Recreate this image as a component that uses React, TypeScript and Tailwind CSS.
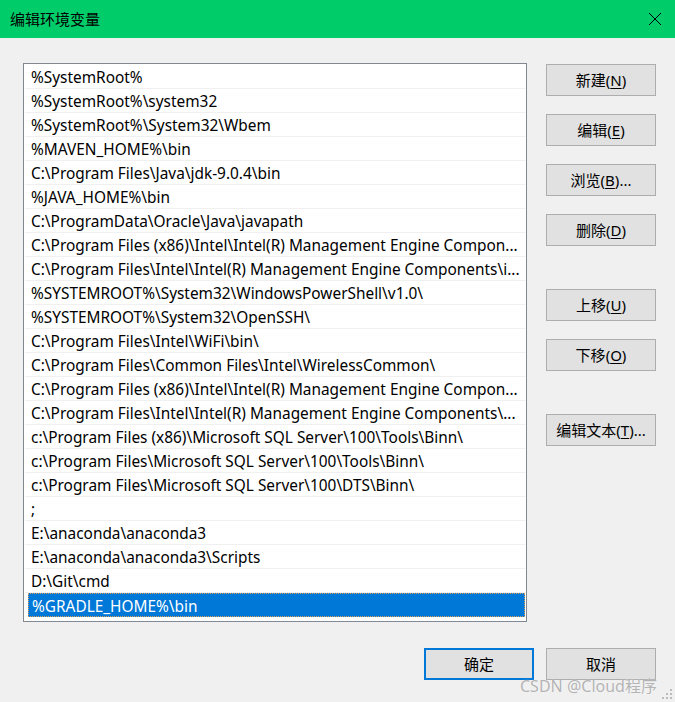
import React from "react";

const paths = [
  "%SystemRoot%",
  "%SystemRoot%\\system32",
  "%SystemRoot%\\System32\\Wbem",
  "%MAVEN_HOME%\\bin",
  "C:\\Program Files\\Java\\jdk-9.0.4\\bin",
  "%JAVA_HOME%\\bin",
  "C:\\ProgramData\\Oracle\\Java\\javapath",
  "C:\\Program Files (x86)\\Intel\\Intel(R) Management Engine Compon...",
  "C:\\Program Files\\Intel\\Intel(R) Management Engine Components\\i...",
  "%SYSTEMROOT%\\System32\\WindowsPowerShell\\v1.0\\",
  "%SYSTEMROOT%\\System32\\OpenSSH\\",
  "C:\\Program Files\\Intel\\WiFi\\bin\\",
  "C:\\Program Files\\Common Files\\Intel\\WirelessCommon\\",
  "C:\\Program Files (x86)\\Intel\\Intel(R) Management Engine Compon...",
  "C:\\Program Files\\Intel\\Intel(R) Management Engine Components\\...",
  "c:\\Program Files (x86)\\Microsoft SQL Server\\100\\Tools\\Binn\\",
  "c:\\Program Files\\Microsoft SQL Server\\100\\Tools\\Binn\\",
  "c:\\Program Files\\Microsoft SQL Server\\100\\DTS\\Binn\\",
  ";",
  "E:\\anaconda\\anaconda3",
  "E:\\anaconda\\anaconda3\\Scripts",
  "D:\\Git\\cmd",
  "%GRADLE_HOME%\\bin",
];

const font = { fontFamily: '"Noto Sans", "Noto Sans CJK SC", sans-serif' };

const Btn = ({ label, keyChar, tail, className = "" }: { label: string; keyChar?: string; tail?: string; className?: string }) => (
  <button
    className={
      "h-[32px] w-[110px] flex items-center justify-center bg-[#e1e1e1] border border-[#adadad] text-[15px] text-black leading-none " +
      className
    }
  >
    {label}
    {keyChar && (
      <>
        (<span className="underline underline-offset-2">{keyChar}</span>)
      </>
    )}
    {tail}
  </button>
);

export default function App() {
  return (
    <div className="relative w-[675px] h-[702px] bg-[#f0f0f0] flex flex-col overflow-hidden" style={font}>
      <div className="h-[38px] bg-[#00cc6a] flex items-center justify-between pl-[10px] pr-[13px]">
        <span className="text-[15px] text-black">编辑环境变量</span>
        <svg width="14" height="14" viewBox="0 0 14 14" className="text-black">
          <path d="M1 1L13 13M13 1L1 13" stroke="currentColor" strokeWidth="1" />
        </svg>
      </div>

      <div className="flex pl-[23px] pt-[25px]">
        <div className="w-[504px] h-[559px] bg-white border border-[#828790] p-px">
          {paths.map((p, i) => {
            const sel = i === paths.length - 1;
            return sel ? (
              <div key={i} className="h-[24px] ml-[3px] pl-[3px] pt-[3px] bg-[#0078d7] border border-dotted border-[#d8a060] flex items-center text-[15.4px] text-white whitespace-nowrap">
                {p}
              </div>
            ) : (
              <div key={i} className="h-[24px] pl-[6px] pt-[3px] border-b border-[#f0f0f0] flex items-center text-[15.4px] text-black whitespace-nowrap overflow-hidden">
                {p}
              </div>
            );
          })}
        </div>

        <div className="ml-[19px] mt-px flex flex-col">
          <Btn label="新建" keyChar="N" />
          <Btn label="编辑" keyChar="E" className="mt-[18px]" />
          <Btn label="浏览" keyChar="B" tail="..." className="mt-[18px]" />
          <Btn label="删除" keyChar="D" className="mt-[18px]" />
          <Btn label="上移" keyChar="U" className="mt-[43px]" />
          <Btn label="下移" keyChar="O" className="mt-[18px]" />
          <Btn label="编辑文本" keyChar="T" tail="..." className="mt-[43px]" />
        </div>
      </div>

      <div className="flex justify-end gap-[12px] pr-[19px] mt-[26px]">
        <button className="h-[32px] w-[110px] flex items-center justify-center bg-[#e1e1e1] border-2 border-[#0078d7] text-[15px] text-black">
          确定
        </button>
        <button className="h-[32px] w-[110px] flex items-center justify-center bg-[#e1e1e1] border border-[#adadad] text-[15px] text-black">
          取消
        </button>
      </div>

      <div
        className="absolute left-[520px] top-[674px] text-[16px] text-[#a0a0a0]/80 whitespace-nowrap"
        style={{ textShadow: "0 0 1px #fff" }}
      >
        CSDN @Cloud程序
      </div>

      <svg className="absolute right-[2px] bottom-[2px]" width="11" height="11" viewBox="0 0 11 11">
        <rect x="8" y="0" width="2" height="2" fill="#bcbcbc" />
        <rect x="4" y="4" width="2" height="2" fill="#bcbcbc" />
        <rect x="8" y="4" width="2" height="2" fill="#bcbcbc" />
        <rect x="0" y="8" width="2" height="2" fill="#bcbcbc" />
        <rect x="4" y="8" width="2" height="2" fill="#bcbcbc" />
        <rect x="8" y="8" width="2" height="2" fill="#bcbcbc" />
      </svg>
    </div>
  );
}
